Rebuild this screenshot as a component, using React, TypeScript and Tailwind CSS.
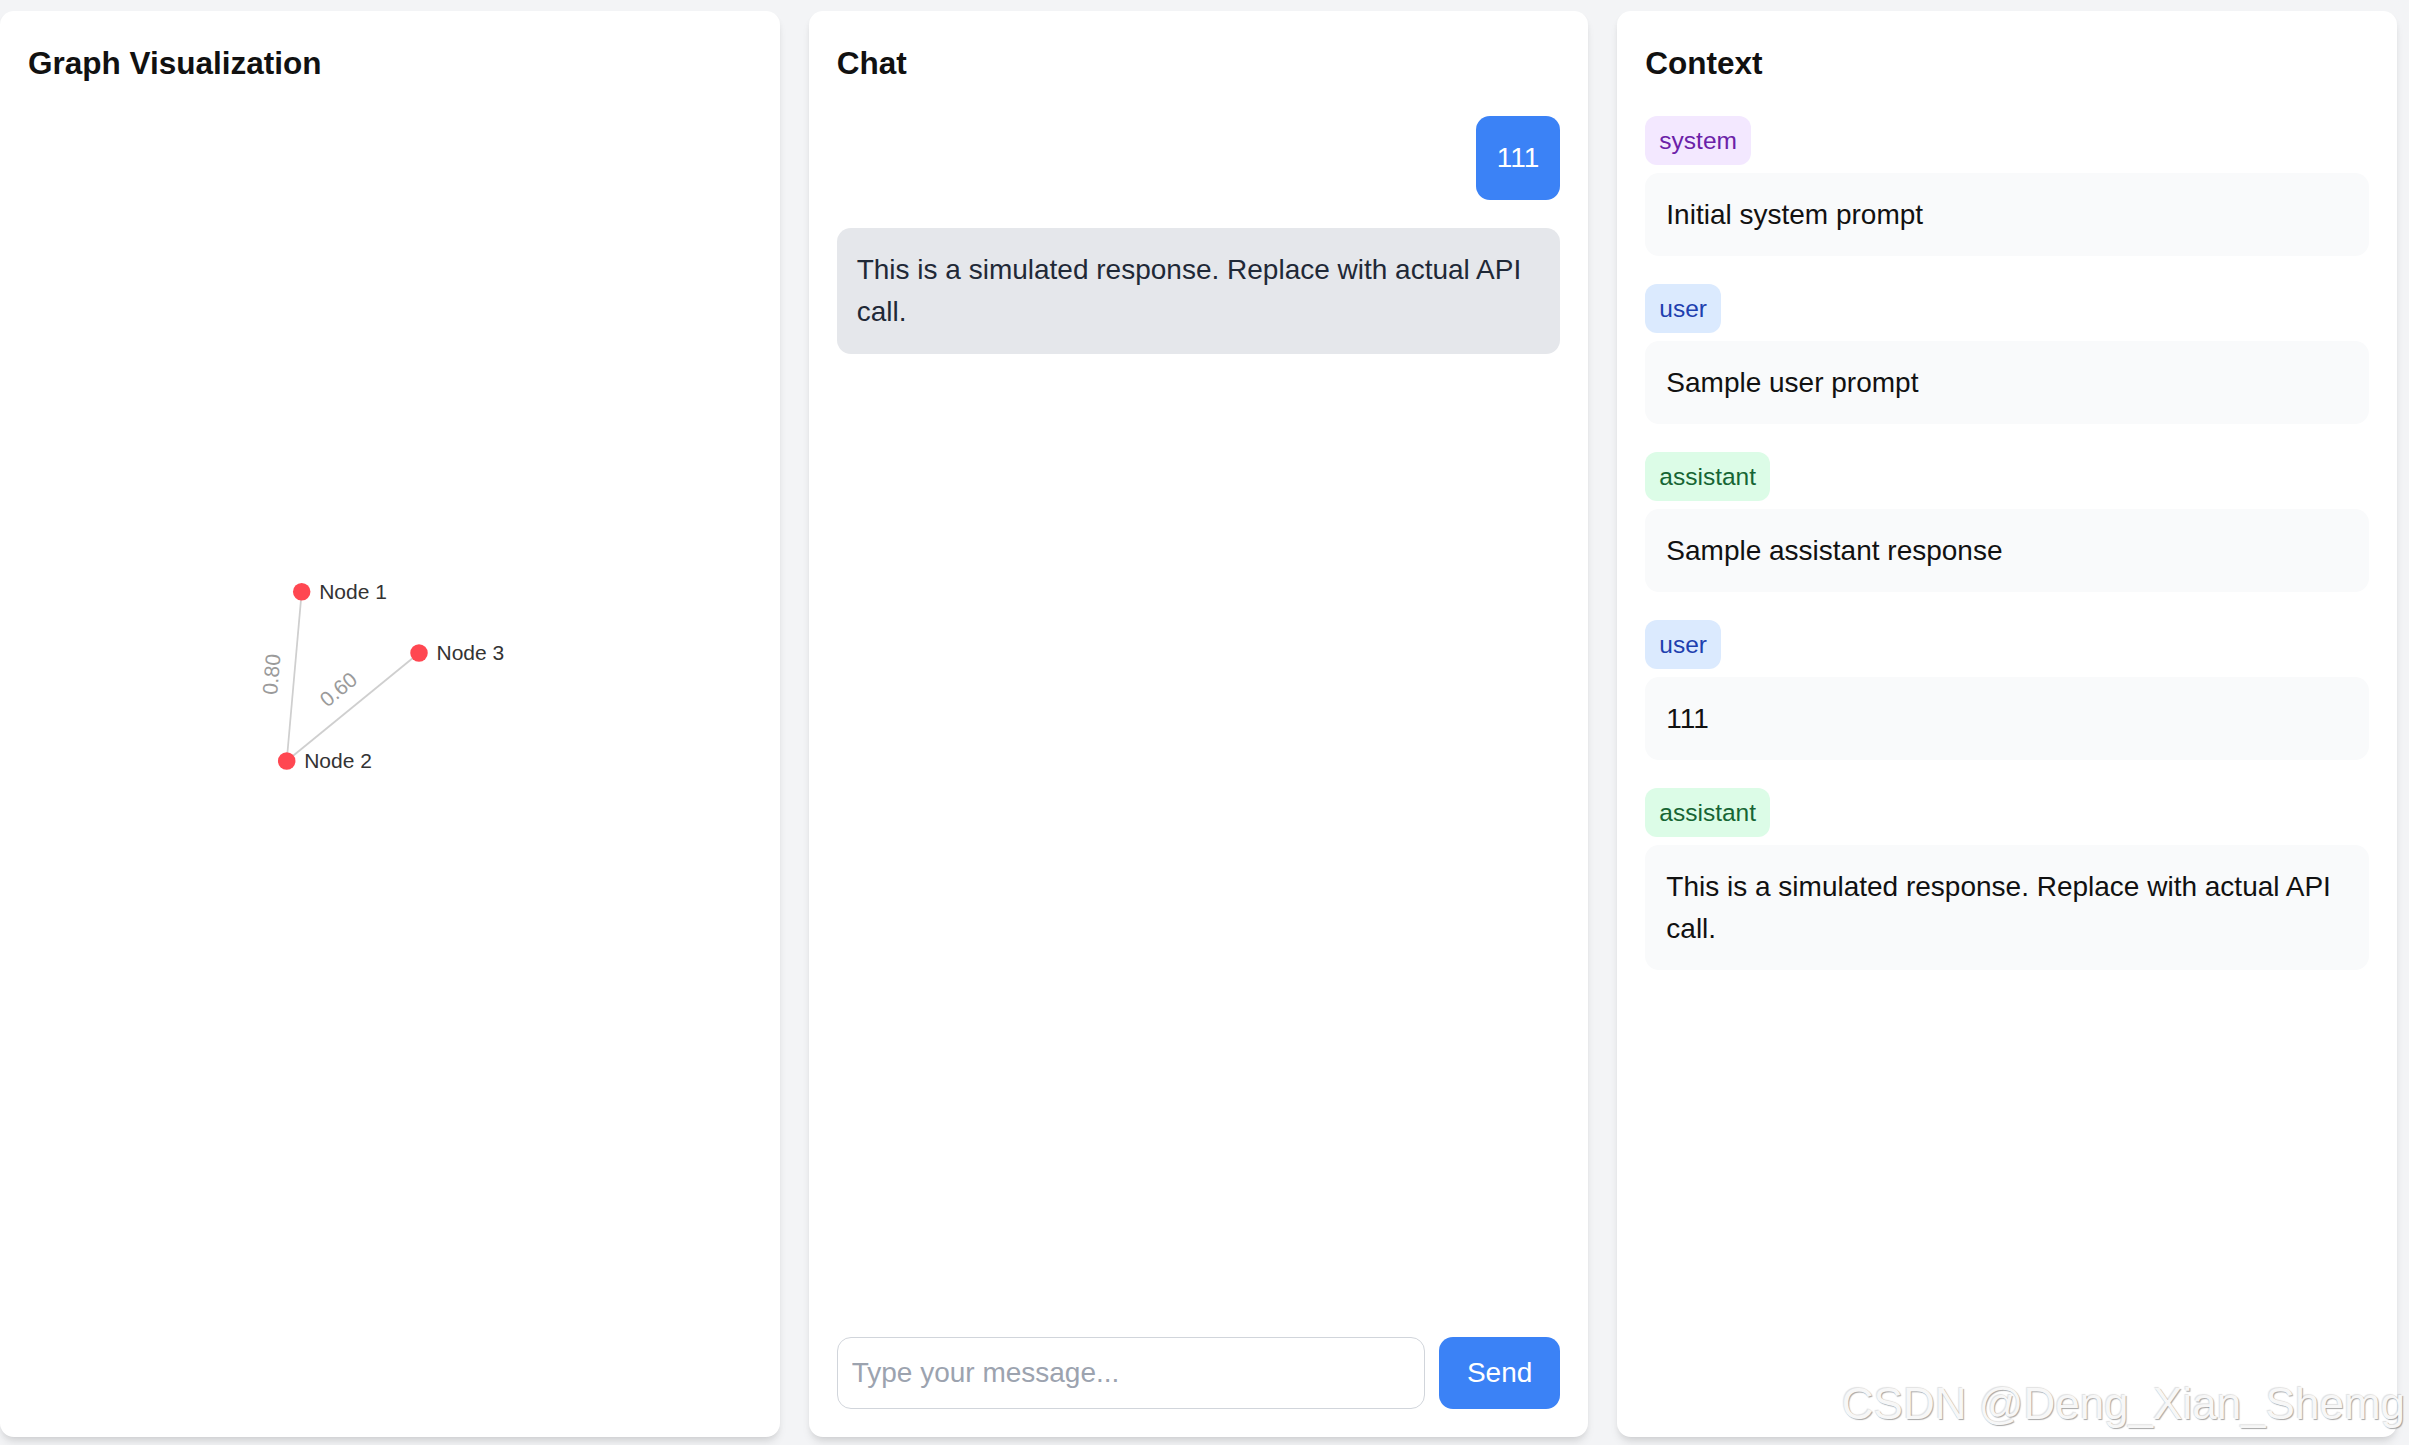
import { useState } from "react";

type Role = "system" | "user" | "assistant";
type Msg = { role: Role; content: string };

const context: Msg[] = [
  { role: "system", content: "Initial system prompt" },
  { role: "user", content: "Sample user prompt" },
  { role: "assistant", content: "Sample assistant response" },
  { role: "user", content: "111" },
  { role: "assistant", content: "This is a simulated response. Replace with actual API call." },
];

const badge: Record<Role, string> = {
  system: "bg-[#f3e8ff] text-[#6b21a8]",
  user: "bg-[#dbeafe] text-[#1e40af]",
  assistant: "bg-[#dcfce7] text-[#166534]",
};

// positions are in svg px, same as the screenshot
const nodes = [
  { id: "Node 1", x: 273.7, y: 475.7 },
  { id: "Node 2", x: 258.7, y: 645 },
  { id: "Node 3", x: 391, y: 537 },
];
const links = [
  { a: 1, b: 0, w: 0.8 },
  { a: 1, b: 2, w: 0.6 },
];

function Graph() {
  return (
    <svg className="w-full flex-1">
      {links.map((l, i) => {
        const s = nodes[l.a];
        const t = nodes[l.b];
        const ang = Math.atan2(t.y - s.y, t.x - s.x);
        const mx = (s.x + t.x) / 2 + 21 * Math.sin(ang);
        const my = (s.y + t.y) / 2 - 21 * Math.cos(ang);
        return (
          <g key={i}>
            <line x1={s.x} y1={s.y} x2={t.x} y2={t.y} stroke="#cfcfcf" strokeWidth={1.75} />
            <text
              x={mx}
              y={my}
              fill="#9a9a9a"
              fontSize={21}
              textAnchor="middle"
              dominantBaseline="middle"
              transform={`rotate(${(ang * 180) / Math.PI} ${mx} ${my})`}
            >
              {l.w.toFixed(2)}
            </text>
          </g>
        );
      })}
      {nodes.map((n) => (
        <g key={n.id}>
          <circle cx={n.x} cy={n.y} r={8.75} fill="#ff4751" />
          <text x={n.x + 17.5} y={n.y + 7} fill="#333" fontSize={21}>
            {n.id}
          </text>
        </g>
      ))}
    </svg>
  );
}

const panel =
  "bg-white rounded-[14px] p-[28px] flex flex-col min-h-0 shadow-[0_7px_10px_-2px_rgba(0,0,0,0.1),0_3px_7px_-3px_rgba(0,0,0,0.1)]";
const title = "text-[31.5px] leading-[49px] font-bold text-[#111] mb-[28px]";

export default function App() {
  const [text, setText] = useState("");

  return (
    <div className="relative h-screen bg-[#f3f4f6] pt-[11px] pr-[12px] pb-[8px] grid grid-cols-3 gap-[29px] font-['Liberation_Sans',Arial,sans-serif]">
      <div className={panel}>
        <h2 className={title}>Graph Visualization</h2>
        <Graph />
      </div>

      <div className={panel}>
        <h2 className={title}>Chat</h2>
        <div className="flex-1 min-h-0 overflow-y-auto flex flex-col gap-[28px]">
          <div className="self-end bg-[#3b82f6] text-white rounded-[14px] px-[21px] py-[21px] text-[28px] leading-[42px]">
            111
          </div>
          <div className="bg-[#e5e7eb] text-[#1f2937] rounded-[14px] px-[20px] py-[21px] text-[28px] leading-[42px]">
            This is a simulated response. Replace with actual API call.
          </div>
        </div>
        <div className="flex gap-[14px] mt-[28px]">
          <input
            value={text}
            onChange={(e) => setText(e.target.value)}
            placeholder="Type your message..."
            className="flex-1 min-w-0 border border-[#d1d5db] rounded-[14px] px-[14px] py-[14px] text-[28px] leading-[42px] text-[#111] placeholder:text-[#9ca3af] outline-none"
          />
          <button className="bg-[#3b82f6] text-white rounded-[14px] px-[28px] text-[28px] leading-[42px]">
            Send
          </button>
        </div>
      </div>

      <div className={panel}>
        <h2 className={title}>Context</h2>
        <div className="flex flex-col gap-[28px]">
          {context.map((m, i) => (
            <div key={i} className="flex flex-col items-start">
              <span className={`${badge[m.role]} rounded-[12px] px-[14px] py-[6.5px] text-[24.5px] leading-[36px] mb-[8px]`}>
                {m.role}
              </span>
              <div className="self-stretch bg-[#f9fafb] rounded-[14px] px-[21px] py-[20.5px] text-[28px] leading-[42px] text-[#111]">
                {m.content}
              </div>
            </div>
          ))}
        </div>
      </div>

      <div className="absolute right-[4px] bottom-[19px] text-[44px] leading-none text-[#f7f7f7] [text-shadow:1px_1px_1px_rgba(0,0,0,0.35),-1px_-1px_1px_rgba(0,0,0,0.12)] pointer-events-none">
        CSDN @Deng_Xian_Shemg
      </div>
    </div>
  );
}
